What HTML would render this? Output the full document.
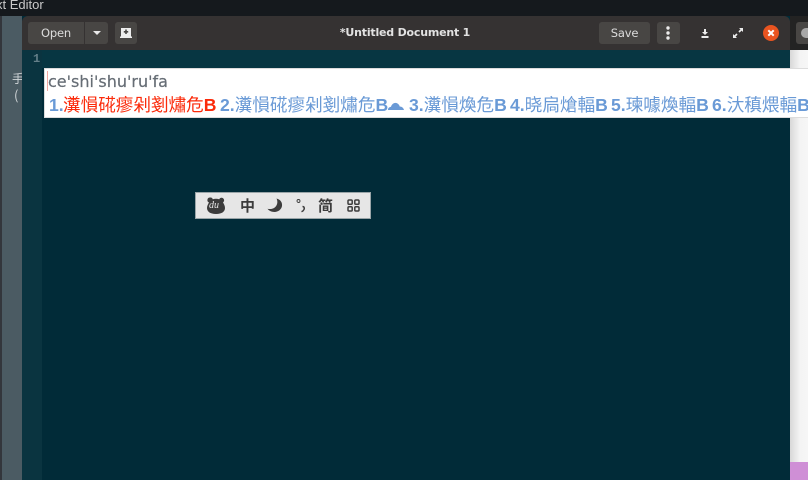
<!DOCTYPE html>
<html><head><meta charset="utf-8"><style>
html,body{margin:0;padding:0}
body{width:808px;height:480px;overflow:hidden;position:relative;background:#15191d;font-family:"DejaVu Sans","Noto Sans CJK SC",sans-serif}
div,span,svg{position:absolute;display:block}
.t{white-space:nowrap}
.btn{background:#484644;border-radius:3px;top:22px;height:22px}
.c{font-size:17.6px;line-height:20px;top:95px;white-space:nowrap;color:#6a9ad6;font-family:"Liberation Sans","Noto Sans CJK SC",sans-serif;font-weight:400}
.c b{font-weight:700}
</style></head><body>
<div style="left:0;top:0;width:808px;height:16px;background:#15191d"></div>
<div class="t" style="left:-4px;top:-2px;font-size:13px;line-height:14px;color:#c9c9c9;font-family:'Liberation Sans',sans-serif">xt Editor</div>

<div style="left:0;top:16px;width:2px;height:464px;background:#33363c"></div>
<div style="left:2px;top:16px;width:20px;height:464px;background:#4b5b63"></div>
<div style="left:12px;top:72px;font-size:12px;line-height:14px;color:#d0d5d8;font-family:'Noto Sans CJK SC',sans-serif" class="t">手</div>
<div style="left:14px;top:87px;font-size:13px;line-height:15px;color:#d0d5d8;font-family:'Noto Sans CJK SC',sans-serif" class="t">(</div>

<div style="left:790px;top:16px;width:18px;height:446px;background:linear-gradient(90deg,#d8d8d8,#f4f4f4 55%,#f6f6f6)"></div>
<div style="left:790px;top:462px;width:18px;height:18px;background:#cf8fd6"></div>
<div style="left:790px;top:16px;width:18px;height:34px;background:#232323"></div>
<div style="left:796px;top:22px;width:12px;height:22px;background:#484644;border-radius:3px 0 0 3px"></div>
<div style="left:801px;top:28px;width:7px;height:10px;background:#a8a8a8;border-radius:5px 0 0 5px"></div>

<div style="left:22px;top:16px;width:768px;height:464px;background:#012b38"></div>
<div style="left:22px;top:16px;width:768px;height:34px;background:#353232;border-radius:6px 6px 0 0"></div>
<div style="left:22px;top:50px;width:20px;height:430px;background:#0a3440"></div>
<div style="left:42px;top:50px;width:748px;height:18px;background:#073642"></div>
<div class="t" style="left:33px;top:52px;font-size:12px;line-height:14px;color:#647f89;font-weight:bold;font-family:'Liberation Mono',monospace">1</div>

<div class="btn" style="left:28px;width:56px;border-radius:3px 0 0 3px"></div>
<div class="t" style="left:28px;width:56px;top:25px;font-size:11.5px;line-height:16px;letter-spacing:-.2px;color:#dcdcdc;text-align:center">Open</div>
<div class="btn" style="left:85px;width:23px;border-radius:0 3px 3px 0"></div>
<svg style="left:92px;top:30px" width="10" height="6"><path d="M1 1H9L5 5Z" fill="#e8e8e8"/></svg>
<div class="btn" style="left:115px;width:22px"></div>
<svg style="left:119px;top:26px" width="14" height="14"><path d="M2 2H12V10.5H13V12H1V10.5H2Z" fill="#ececec"/><path d="M7 3.5V8M4.8 5.8H9.2" stroke="#484644" stroke-width="1.6"/></svg>

<div class="t" style="left:300px;width:210px;top:25px;font-size:11px;line-height:16px;letter-spacing:-.2px;font-weight:bold;color:#e2e2e2;text-align:center">*Untitled Document 1</div>

<div class="btn" style="left:599px;width:51px"></div>
<div class="t" style="left:599px;width:51px;top:25px;font-size:11.5px;line-height:16px;letter-spacing:-.2px;color:#dcdcdc;text-align:center">Save</div>
<div class="btn" style="left:657px;width:23px"></div>
<svg style="left:663px;top:24px" width="10" height="18"><circle cx="5" cy="4" r="1.7" fill="#ececec"/><circle cx="5" cy="9" r="1.7" fill="#ececec"/><circle cx="5" cy="14" r="1.7" fill="#ececec"/></svg>
<svg style="left:699px;top:27px" width="12" height="12"><path d="M5 2H7V5H9L6 8 3 5H5ZM2.5 9H9.5V11H2.5Z" fill="#ececec"/></svg>
<svg style="left:732px;top:27px" width="12" height="12"><path d="M7 1H11V5L9.6 3.6 7.6 5.6 6.4 4.4 8.4 2.4ZM5 11H1V7L2.4 8.4 4.4 6.4 5.6 7.6 3.6 9.6Z" fill="#ececec"/></svg>
<div style="left:763px;top:25px;width:16px;height:16px;border-radius:50%;background:#e95420"></div>
<svg style="left:763px;top:25px" width="16" height="16"><path d="M5.3 5.3L10.7 10.7M10.7 5.3L5.3 10.7" stroke="#fff" stroke-width="2"/></svg>

<div style="left:44px;top:68px;width:770px;height:50px;background:#fff;box-shadow:inset 0 0 0 1px #dcdcdc"></div>
<div style="left:47px;top:71px;width:1px;height:20px;background:#f0a8a0"></div>
<div class="t" style="left:48px;top:72px;font-size:16px;line-height:20px;color:#666d75;font-family:'DejaVu Sans',sans-serif;-webkit-text-stroke:.2px #666d75">ce'shi'shu'ru'fa</div>

<div class="c" style="left:49px"><b>1.</b></div>
<div class="c" style="left:63px;color:#fb2a0a">瀵愪硴瘳剁剗熽危<b>B</b></div>
<div class="c" style="left:220px"><b>2.</b>瀵愪硴瘳剁剗熽危<b>B</b></div>
<svg style="left:387px;top:100px" width="18" height="11"><path d="M1 10C1 7.5 3 7 4 6.8 5 3.5 8 2 10.5 3.5 12 4.5 12.5 5.5 12.7 6.5 15 6.5 16.5 8 17 10Z" fill="#6a9ad6"/></svg>
<div class="c" style="left:409px"><b>3.</b>瀵愪煥危<b>B</b></div>
<div class="c" style="left:510px"><b>4.</b>晓扃熗輻<b>B</b></div>
<div class="c" style="left:611px"><b>5.</b>瑓噱煥輻<b>B</b></div>
<div class="c" style="left:712px"><b>6.</b>汏稹煨輻<b>B</b></div>

<div style="left:195px;top:192px;width:176px;height:27px;background:#e6e6e6;box-shadow:inset 0 0 0 1px #9aa5a8"></div>
<svg style="left:206px;top:196px" width="20" height="19"><path d="M4 1.5A2.6 2.6 0 0 1 6.8 3.2C8.8 2.6 11.2 2.6 13.2 3.2A2.6 2.6 0 1 1 17 6.5C18 8 19 10 19 12 19 15.5 16 18 10 18 4 18 1 15.5 1 12 1 10 2 8 3 6.5A2.6 2.6 0 0 1 4 1.5Z" fill="#3c3c3c"/></svg>
<div class="t" style="left:209px;top:200px;font-size:10px;line-height:12px;font-style:italic;font-family:'Liberation Serif',serif;color:#e6e6e6">du</div>
<div class="t" style="left:240px;top:197px;font-size:15px;line-height:18px;font-weight:700;color:#3c3c3c;font-family:'Noto Sans CJK SC',sans-serif">中</div>
<svg style="left:267px;top:198px" width="16" height="15"><path d="M9.5 0.5C13.5 1.5 15.5 4.5 15 8 14.5 11.5 11 14 7.5 14 4.5 14 2 12.8 0.5 10.8 3 11.4 6 11 8 9.2 10.5 7 11 3.5 9.5 0.5Z" fill="#3c3c3c"/></svg>
<svg style="left:296px;top:198px" width="10" height="15"><circle cx="2.5" cy="3" r="1.5" fill="none" stroke="#3c3c3c" stroke-width=".9"/><path d="M6.5 8.5C8.2 8.5 8.6 10 8 11.5 7.5 12.6 6.6 13.3 5.5 13.7" stroke="#3c3c3c" stroke-width="1.5" fill="none"/></svg>
<div class="t" style="left:318px;top:197px;font-size:15px;line-height:18px;font-weight:700;color:#3c3c3c;font-family:'Noto Sans CJK SC',sans-serif">简</div>
<svg style="left:347px;top:199px" width="13" height="13" fill="none" stroke="#3c3c3c" stroke-width="1.5"><rect x="1" y="1" width="4.2" height="4.2" rx="1"/><rect x="7.8" y="1" width="4.2" height="4.2" rx="1"/><rect x="1" y="7.8" width="4.2" height="4.2" rx="1"/><rect x="7.8" y="7.8" width="4.2" height="4.2" rx="1"/></svg>
</body></html>
